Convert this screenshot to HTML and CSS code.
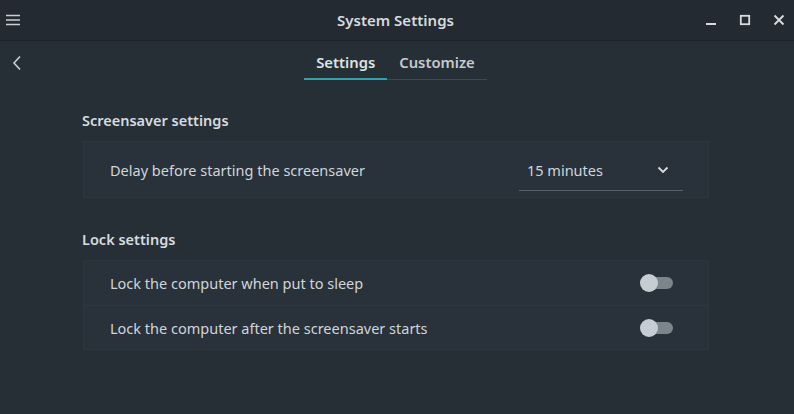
FILE: index.html
```html
<!DOCTYPE html>
<html lang="en">

<head>
  <meta charset="UTF-8" />
  <title>System Settings</title>
  <link rel="stylesheet" href="styles.css">
</head>

<body>
  <div class="window">
    <header class="titlebar">
      <button class="icon-btn menu" aria-label="Menu">
        <svg width="14" height="12" viewBox="0 0 14 12"><path d="M0 1.5h14M0 6h14M0 10.5h14" stroke="#c9cfd4" stroke-width="1.6"/></svg>
      </button>
      <h1>System Settings</h1>
      <div class="controls">
        <svg width="12" height="12" viewBox="0 0 12 12"><path d="M1 10h10" stroke="#d6dbdf" stroke-width="2"/></svg>
        <svg width="12" height="12" viewBox="0 0 12 12"><rect x="1.8" y="1.8" width="8.4" height="8.4" fill="none" stroke="#d6dbdf" stroke-width="1.8"/></svg>
        <svg width="12" height="12" viewBox="0 0 12 12"><path d="M1.5 1.5l9 9M10.5 1.5l-9 9" stroke="#d6dbdf" stroke-width="1.9"/></svg>
      </div>
    </header>

    <main class="content">
      <div class="topnav">
        <button class="icon-btn back" aria-label="Back">
          <svg width="10" height="16" viewBox="0 0 10 16"><path d="M8 1.5L2 8l6 6.5" fill="none" stroke="#c9cfd4" stroke-width="1.6"/></svg>
        </button>
        <nav class="tabs">
          <a class="tab active">Settings</a>
          <a class="tab">Customize</a>
        </nav>
      </div>

      <section class="group">
        <h2>Screensaver settings</h2>
        <div class="card">
          <div class="row">
            <span>Delay before starting the screensaver</span>
            <div class="combo">
              <span>15 minutes</span>
              <svg width="12" height="8" viewBox="0 0 12 8"><path d="M1.5 1.5L6 6l4.5-4.5" fill="none" stroke="#d6dbdf" stroke-width="1.9"/></svg>
            </div>
          </div>
        </div>
      </section>

      <section class="group">
        <h2>Lock settings</h2>
        <div class="card">
          <div class="row small">
            <span>Lock the computer when put to sleep</span>
            <div class="switch"><i></i></div>
          </div>
          <div class="row small">
            <span>Lock the computer after the screensaver starts</span>
            <div class="switch"><i></i></div>
          </div>
        </div>
      </section>
    </main>
  </div>
</body>

</html>
```

FILE: styles.css
```css
* {
  box-sizing: border-box;
  margin: 0;
  padding: 0;
  font-family: 'Noto Sans', sans-serif;
}

body {
  width: 794px;
  height: 414px;
  background: #262f36;
  color: #d4d9dd;
  overflow: hidden;
}

.window {
  display: flex;
  flex-direction: column;
  height: 100%;
}

.icon-btn {
  background: none;
  border: none;
  display: flex;
  align-items: center;
  justify-content: center;
}

.titlebar {
  height: 41px;
  background: #232a31;
  border-bottom: 1px solid #1d2328;
  display: flex;
  align-items: center;
  padding: 0 9px 0 6px;
}

.titlebar h1 {
  flex: 1;
  text-align: center;
  font-size: 15px;
  font-weight: 600;
  color: #d6dbdf;
  padding-left: 66px;
}

.controls {
  display: flex;
  gap: 22px;
  align-items: center;
}

.content {
  flex: 1;
  padding: 0 85px 0 82px;
}

.topnav {
  position: relative;
  display: flex;
  justify-content: center;
  padding-top: 11px;
}

.back {
  position: absolute;
  left: -70px;
  top: 14px;
}

.tabs {
  display: flex;
  border-bottom: 1px solid #3f4950;
  margin-left: 0;
}

.tab {
  font-size: 14.8px;
  font-weight: 600;
  color: #c4cacf;
  padding: 0 12px 6px;
  margin-bottom: -1px;
  border-bottom: 2px solid transparent;
}

.tab.active {
  color: #dde2e5;
  border-color: #2aa3b3;
}

.group h2 {
  font-size: 14.5px;
  font-weight: 600;
  color: #d6dbdf;
  margin: 30px 0 11px;
}

.group + .group h2 {
  margin-top: 31px;
}

.card {
  background: #29323a;
  border: 1px solid #2c363e;
  margin-left: 1px;
}

.row {
  height: 55px;
  display: flex;
  align-items: center;
  justify-content: space-between;
  padding: 0 25px 0 26px;
  font-size: 14.5px;
  color: #d0d5d9;
}

.row.small {
  height: 44px;
  padding-right: 35px;
}

.row.small + .row.small {
  border-top: 1px solid #2e383f;
}

.combo {
  width: 164px;
  height: 40px;
  display: flex;
  align-items: center;
  justify-content: space-between;
  padding: 0 14px 0 8px;
  border-bottom: 1px solid #58626a;
  margin-top: 2px;
}

.switch {
  position: relative;
  width: 32px;
  height: 12px;
  border-radius: 6px;
  background: #7b858c;
}

.switch i {
  position: absolute;
  left: -1px;
  top: -3px;
  width: 18px;
  height: 18px;
  border-radius: 50%;
  background: #c7ced3;
}
```
